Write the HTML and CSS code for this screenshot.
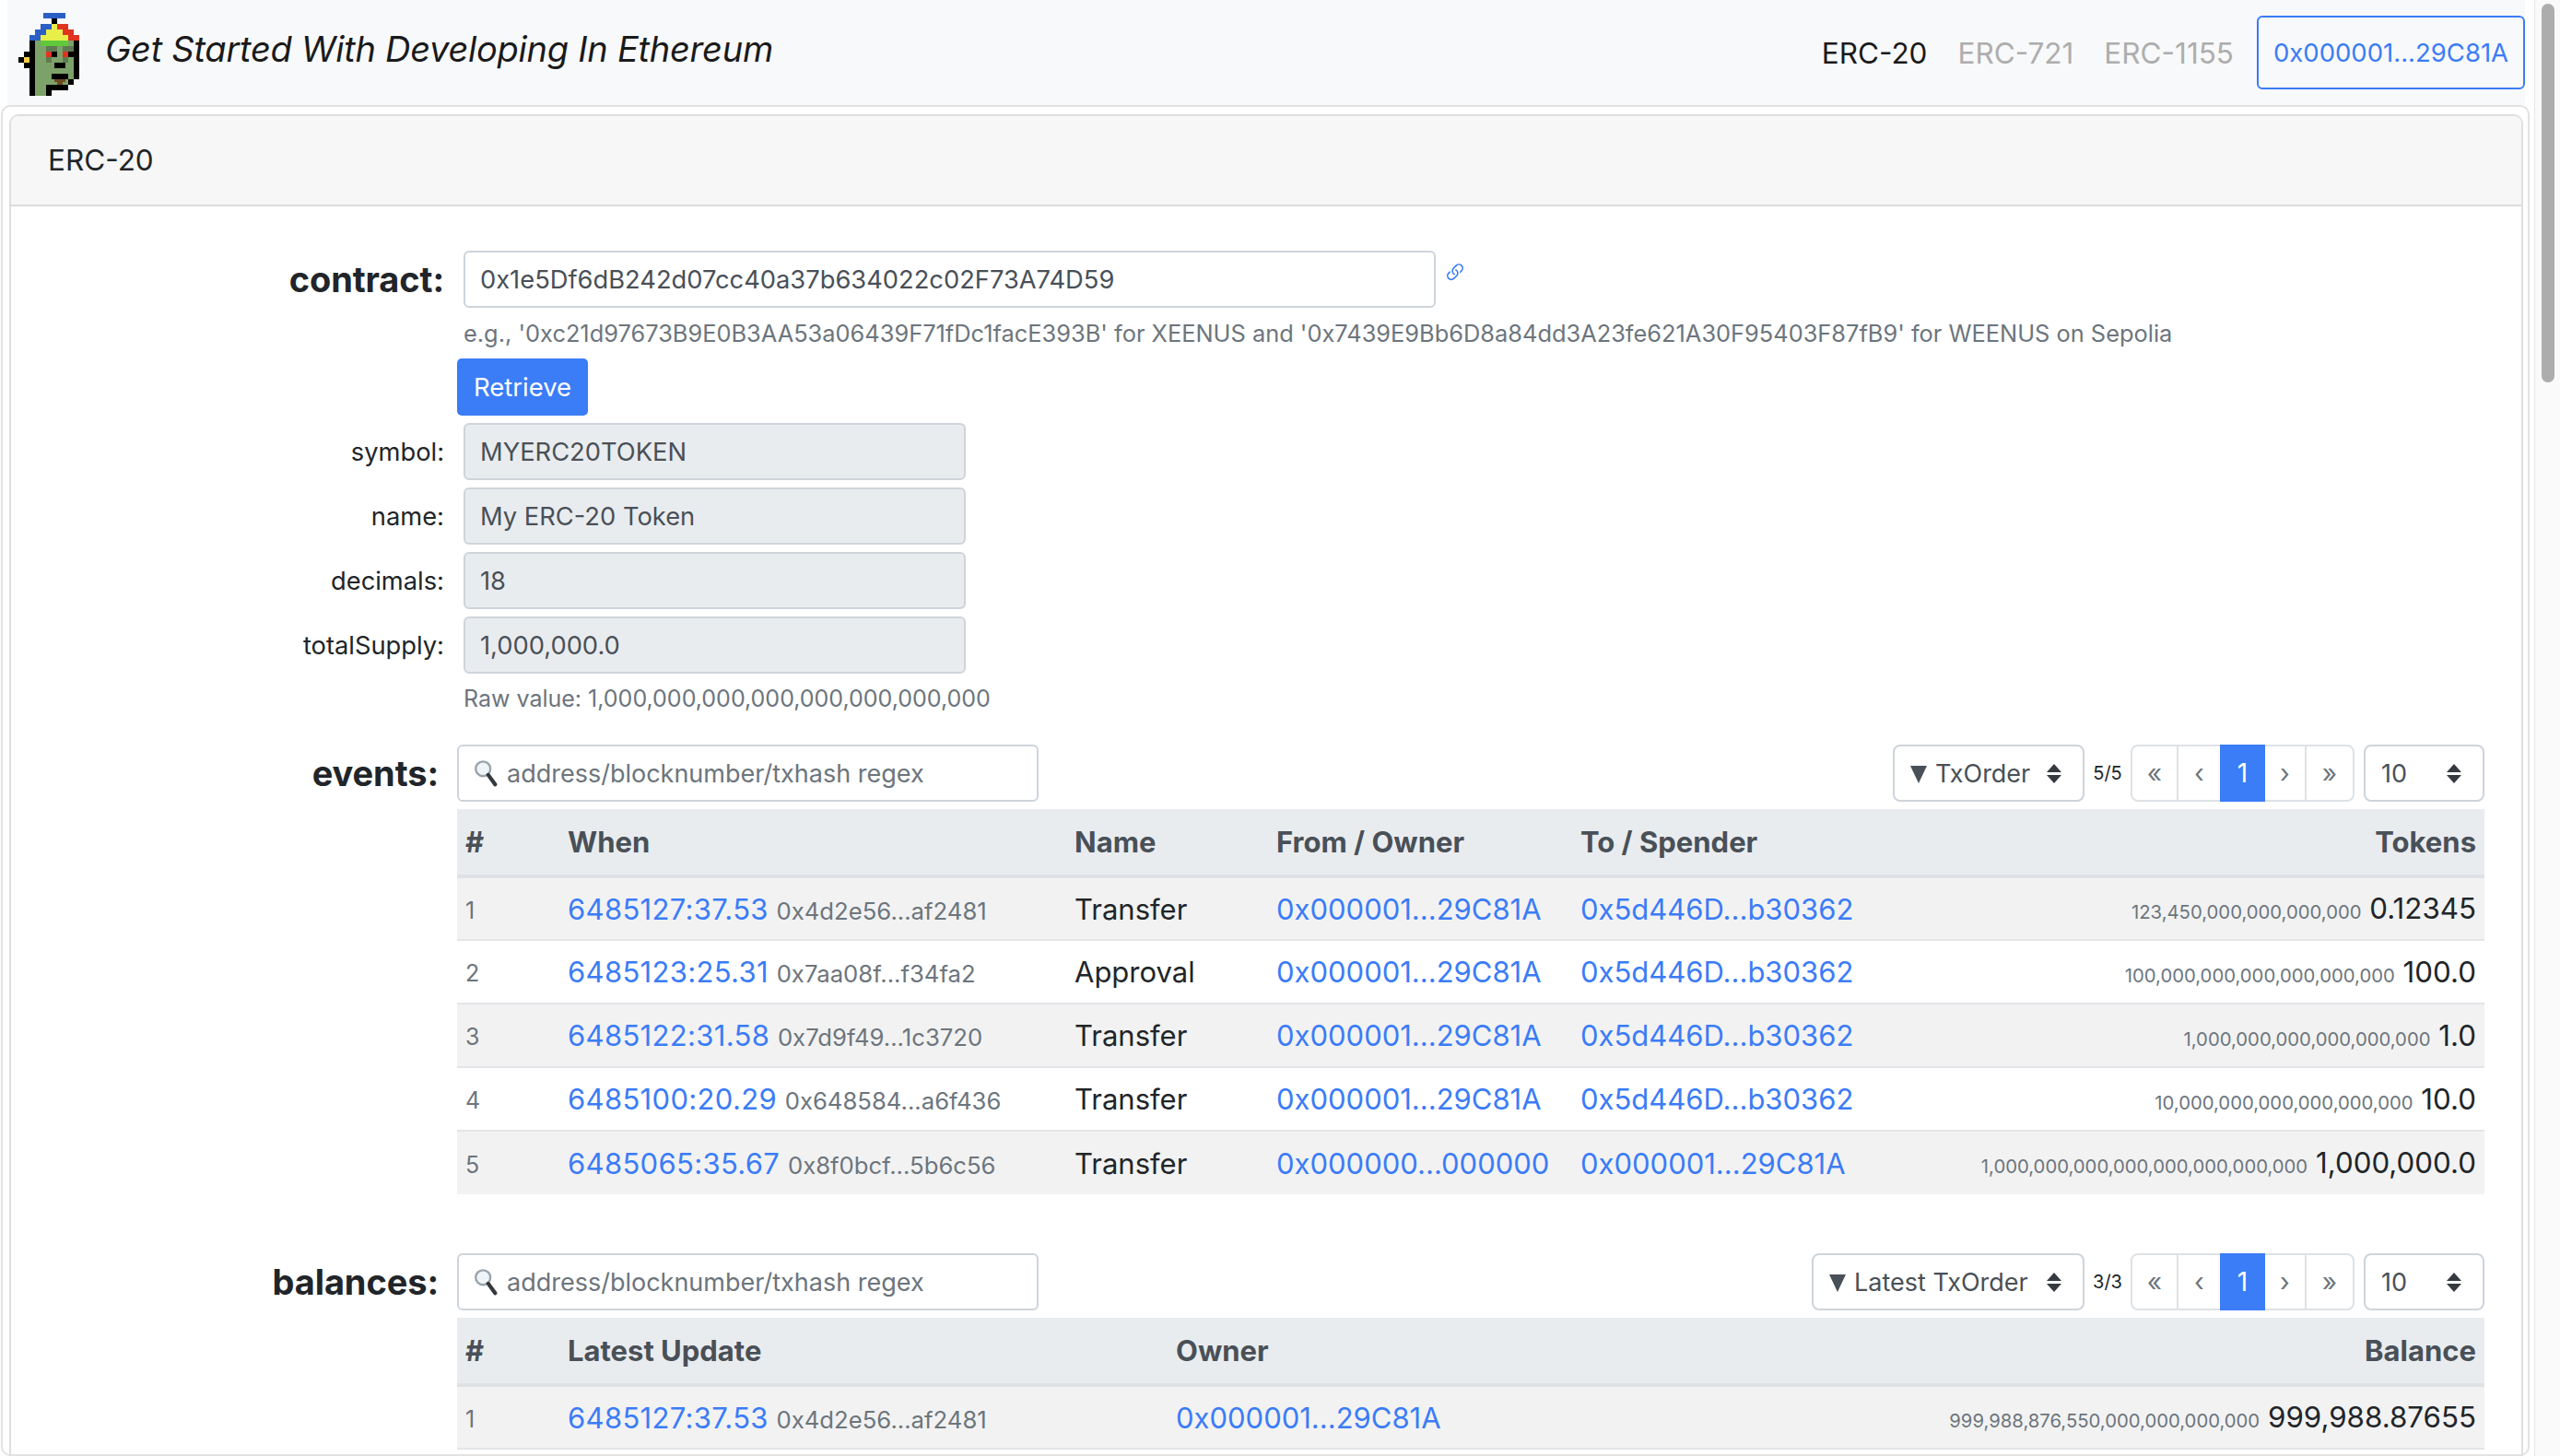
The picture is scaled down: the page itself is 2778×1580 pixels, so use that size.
FILE: index.html
```html
<!DOCTYPE html>
<html>
<head>
    <title>Get Started With Developing In Ethereum</title>
    <meta name="viewport" content="width=device-width, initial-scale=1.0">
    <link rel="stylesheet" href="styles.css">
</head>
<body>
    <div class="app">
        <div class="main">
            <nav class="navbar">
                <svg class="logo" viewBox="60 42 198 270" shape-rendering="crispEdges">
                    <path fill="#7da269" d="M114 132h126v144h-18v18h-72v18h-36z"/>
                    <path fill="#2b5fc6" d="M141 42h72v18h-72zM132 78h36v18h-36zM114 96h36v18h-36zM96 114h36v18H96z"/>
                    <path fill="#e0341e" d="M186 78h36v18h-36zM204 96h36v18h-36zM222 114h36v18h-36z"/>
                    <path fill="#e8ee4a" d="M168 78h18v18h-18zM150 96h54v18h-54zM132 114h90v18h-90z"/>
                    <path fill="#5fc93a" d="M132 132h90v18h-90z"/>
                    <path fill="#5f7a52" d="M150 150h36v18h-36zM204 150h36v18h-36zM150 186h18v18h-18zM204 186h18v18h-18z"/>
                    <path fill="#e0341e" d="M150 168h18v18h-18zM204 168h18v18h-18z"/>
                    <path fill="#000" d="M168 60h18v18h-18zM96 132h18v180H96zM240 132h18v126h-18zM168 168h18v18h-18zM222 168h18v18h-18zM78 168h18v18H78zM60 186h18v18H60zM96 186h18v18H96zM78 204h18v18H78zM178 204h36v18h-36zM168 240h54v18h-54zM222 258h18v18h-18zM150 276h72v18h-72zM150 294h18v18h-18z"/>
                    <path fill="#f5cf4a" d="M78 186h18v18H78z"/>
                    <path fill="#6e4a22" d="M178 258h36v10h-36zM186 268h18v8h-18z"/>
                </svg>
                <span class="brand">Get Started With Developing In Ethereum</span>
                <div class="nav-links">
                    <a class="nav-link active">ERC-20</a>
                    <a class="nav-link">ERC-721</a>
                    <a class="nav-link">ERC-1155</a>
                    <button class="btn-account">0x000001...29C81A</button>
                </div>
            </nav>

            <div class="outer-card">
                <div class="card">
                    <div class="card-header">ERC-20</div>
                    <div class="card-body">
                        <div class="field field-first">
                            <label class="field-label field-label-big">contract:</label>
                            <input class="input input-contract" type="text" value="0x1e5Df6dB242d07cc40a37b634022c02F73A74D59">
                            <svg class="link-icon" viewBox="0 0 16 16" fill="#3b7cf7">
                                <path d="M4.715 6.542 3.343 7.914a3 3 0 1 0 4.243 4.243l1.828-1.829A3 3 0 0 0 8.586 5.500L8 6.086a1.002 1.002 0 0 0-.154.199 2 2 0 0 1 .861 3.337L6.880 11.450a2 2 0 1 1-2.830-2.830l.793-.792a4.018 4.018 0 0 1-.128-1.287z"/>
                                <path d="M6.586 4.672A3 3 0 0 0 7.414 9.500l.775-.776a2 2 0 0 1-.896-3.346L9.120 3.550a2 2 0 1 1 2.830 2.830l-.793.792c.112.420.155.855.128 1.287l1.372-1.372a3 3 0 1 0-4.243-4.243L6.586 4.672z"/>
                            </svg>
                        </div>
                        <div class="help help-hint">e.g., '0xc21d97673B9E0B3AA53a06439F71fDc1facE393B' for XEENUS and '0x7439E9Bb6D8a84dd3A23fe621A30F95403F87fB9' for WEENUS on Sepolia</div>
                        <button class="btn-primary">Retrieve</button>
                        <div class="field">
                            <label class="field-label">symbol:</label>
                            <input class="input input-readonly" type="text" value="MYERC20TOKEN" readonly>
                        </div>
                        <div class="field">
                            <label class="field-label">name:</label>
                            <input class="input input-readonly" type="text" value="My ERC-20 Token" readonly>
                        </div>
                        <div class="field">
                            <label class="field-label">decimals:</label>
                            <input class="input input-readonly" type="text" value="18" readonly>
                        </div>
                        <div class="field">
                            <label class="field-label">totalSupply:</label>
                            <input class="input input-readonly" type="text" value="1,000,000.0" readonly>
                        </div>
                        <div class="help help-raw">Raw value: 1,000,000,000,000,000,000,000,000</div>

                        <section class="section section-events">
                            <label class="section-label">events:</label>
                            <div class="section-content">
                                <div class="toolbar">
                                    <div class="search">
                                        <svg class="search-icon" viewBox="0 0 28 32">
                                            <circle cx="11" cy="11" r="8.500" fill="#eef4f8" stroke="#9aa3aa" stroke-width="2.500"/>
                                            <path d="M17 18l8 11" stroke="#33383c" stroke-width="4.500" stroke-linecap="round"/>
                                        </svg>
                                        <input class="input input-search" type="text" placeholder="address/blocknumber/txhash regex">
                                    </div>
                                    <div class="select select-txorder">
                                        <span class="select-value"><span class="tri"></span>TxOrder</span>
                                        <span class="updown"></span>
                                    </div>
                                    <span class="page-count">5/5</span>
                                    <ul class="pagination">
                                        <li class="page-item page-first">«</li>
                                        <li class="page-item page-prev">‹</li>
                                        <li class="page-item page-current">1</li>
                                        <li class="page-item page-next">›</li>
                                        <li class="page-item page-last">»</li>
                                    </ul>
                                    <div class="select select-size">
                                        <span class="select-value">10</span>
                                        <span class="updown"></span>
                                    </div>
                                </div>
                                <table class="table table-events">
                                    <thead>
                                        <tr><th class="col-num">#</th><th class="col-when">When</th><th class="col-name">Name</th><th class="col-from">From / Owner</th><th class="col-from">To / Spender</th><th class="right">Tokens</th></tr>
                                    </thead>
                                    <tbody>
                                        <tr><td class="num">1</td><td><a class="link when">6485127:37.53</a> <span class="sub">0x4d2e56...af2481</span></td><td>Transfer</td><td><a class="link">0x000001...29C81A</a></td><td><a class="link">0x5d446D...b30362</a></td><td class="right"><span class="raw">123,450,000,000,000,000</span> 0.12345</td></tr>
                                        <tr><td class="num">2</td><td><a class="link when">6485123:25.31</a> <span class="sub">0x7aa08f...f34fa2</span></td><td>Approval</td><td><a class="link">0x000001...29C81A</a></td><td><a class="link">0x5d446D...b30362</a></td><td class="right"><span class="raw">100,000,000,000,000,000,000</span> 100.0</td></tr>
                                        <tr><td class="num">3</td><td><a class="link when">6485122:31.58</a> <span class="sub">0x7d9f49...1c3720</span></td><td>Transfer</td><td><a class="link">0x000001...29C81A</a></td><td><a class="link">0x5d446D...b30362</a></td><td class="right"><span class="raw">1,000,000,000,000,000,000</span> 1.0</td></tr>
                                        <tr><td class="num">4</td><td><a class="link when">6485100:20.29</a> <span class="sub">0x648584...a6f436</span></td><td>Transfer</td><td><a class="link">0x000001...29C81A</a></td><td><a class="link">0x5d446D...b30362</a></td><td class="right"><span class="raw">10,000,000,000,000,000,000</span> 10.0</td></tr>
                                        <tr class="last"><td class="num">5</td><td><a class="link when">6485065:35.67</a> <span class="sub">0x8f0bcf...5b6c56</span></td><td>Transfer</td><td><a class="link">0x000000...000000</a></td><td><a class="link">0x000001...29C81A</a></td><td class="right"><span class="raw">1,000,000,000,000,000,000,000,000</span> 1,000,000.0</td></tr>
                                    </tbody>
                                </table>
                            </div>
                        </section>

                        <section class="section section-balances">
                            <label class="section-label">balances:</label>
                            <div class="section-content">
                                <div class="toolbar">
                                    <div class="search">
                                        <svg class="search-icon" viewBox="0 0 28 32">
                                            <circle cx="11" cy="11" r="8.500" fill="#eef4f8" stroke="#9aa3aa" stroke-width="2.500"/>
                                            <path d="M17 18l8 11" stroke="#33383c" stroke-width="4.500" stroke-linecap="round"/>
                                        </svg>
                                        <input class="input input-search" type="text" placeholder="address/blocknumber/txhash regex">
                                    </div>
                                    <div class="select select-latest">
                                        <span class="select-value"><span class="tri"></span>Latest TxOrder</span>
                                        <span class="updown"></span>
                                    </div>
                                    <span class="page-count">3/3</span>
                                    <ul class="pagination">
                                        <li class="page-item page-first">«</li>
                                        <li class="page-item page-prev">‹</li>
                                        <li class="page-item page-current">1</li>
                                        <li class="page-item page-next">›</li>
                                        <li class="page-item page-last">»</li>
                                    </ul>
                                    <div class="select select-size">
                                        <span class="select-value">10</span>
                                        <span class="updown"></span>
                                    </div>
                                </div>
                                <table class="table table-balances">
                                    <thead>
                                        <tr><th class="col-num">#</th><th class="col-update">Latest Update</th><th>Owner</th><th class="right">Balance</th></tr>
                                    </thead>
                                    <tbody>
                                        <tr><td class="num">1</td><td><a class="link when">6485127:37.53</a> <span class="sub">0x4d2e56...af2481</span></td><td><a class="link">0x000001...29C81A</a></td><td class="right"><span class="raw">999,988,876,550,000,000,000,000</span> 999,988.87655</td></tr>
                                    </tbody>
                                </table>
                            </div>
                        </section>
                    </div>
                </div>
            </div>
        </div>
        <div class="scrollbar"><div class="scrollbar-thumb"></div></div>
    </div>
</body>
</html>
```

FILE: styles.css
```css
* {
    box-sizing: border-box;
}

html, body {
    margin: 0;
    height: 100%;
    overflow: hidden;
}

body {
    background-color: #fff;
    font-family: Inter, 'Liberation Sans', sans-serif;
    font-size: 27.3px;
    color: #212529;
}

.app {
    display: flex;
    height: 1580px;
    overflow: hidden;
}

.main {
    width: 2750px;
    flex: none;
}

/* Top bar */
.navbar {
    display: flex;
    align-items: center;
    height: 114px;
    margin: 0 10px 0 8px;
    background-color: #f8f9fa;
}

.logo {
    width: 66px;
    height: 90px;
    margin: 4px 0 0 12px;
}

.brand {
    margin: -8px 0 0 28px;
    font-size: 38px;
    font-style: italic;
    letter-spacing: -0.25px;
    color: #1a1a1a;
}

.nav-links {
    display: flex;
    align-items: center;
    margin-left: auto;
}

.nav-link {
    margin-right: 33px;
    font-size: 31.5px;
    color: #adadad;
}

.nav-link.active {
    color: #1a1a1a;
}

.btn-account {
    width: 291px;
    height: 80px;
    margin-left: -8px;
    padding: 0;
    border: 2px solid #3b7cf7;
    border-radius: 6px;
    background: transparent;
    color: #3b7cf7;
    font-family: inherit;
    font-size: 27.5px;
}

/* Cards */
.outer-card {
    height: 1466px;
    margin: 0 5px 0 1px;
    padding: 8px 5px 0 7px;
    border: 2px solid #e2e2e2;
    border-radius: 10px;
}

.card {
    height: 1480px;
    border: 2px solid #dfdfdf;
    border-radius: 10px;
}

.card-header {
    height: 98px;
    padding-left: 40px;
    line-height: 96px;
    font-size: 31.5px;
    background-color: #f7f7f7;
    border-bottom: 2px solid #dcdcdc;
    border-radius: 8px 8px 0 0;
}

.card-body {
    padding-top: 48px;
}

/* Token fields */
.field {
    display: flex;
    align-items: center;
    height: 62px;
    margin-bottom: 8px;
}

.field-first {
    margin-bottom: 0;
}

.field-label {
    width: 470px;
    margin-right: 21px;
    text-align: right;
}

.field-label-big {
    font-size: 38px;
    font-weight: 700;
    letter-spacing: -0.1px;
}

.input {
    height: 62px;
    padding: 0 16px;
    border: 2px solid #ced4da;
    border-radius: 6px;
    font-family: inherit;
    font-size: 27.3px;
    color: #495057;
    outline: none;
}

.input-contract {
    width: 1055px;
}

.input-readonly {
    width: 545px;
    background-color: #e9ecef;
}

.link-icon {
    width: 26px;
    height: 26px;
    margin: -15px 0 0 8px;
}

.help {
    font-size: 25px;
    color: #6c757d;
    margin-left: 491px;
}

.help-hint {
    height: 55px;
    line-height: 56px;
    font-size: 25.4px;
}

.help-raw {
    height: 40px;
    line-height: 38px;
    margin-bottom: 29px;
}

.btn-primary {
    display: block;
    width: 142px;
    height: 62px;
    margin: 0 0 8px 484px;
    padding: 0;
    border: none;
    border-radius: 5px;
    background-color: #3b7cf7;
    color: #fff;
    font-family: inherit;
    font-size: 27.5px;
}

/* events and balances */
.section {
    display: flex;
}

.section-balances {
    margin-top: 64px;
}

.section-label {
    width: 464px;
    margin-right: 20px;
    line-height: 62px;
    text-align: right;
    font-size: 38px;
    font-weight: 700;
    letter-spacing: -0.1px;
}

.section-content {
    width: 2200px;
}

.toolbar {
    display: flex;
    align-items: center;
    height: 62px;
    margin-bottom: 8px;
}

.search {
    position: relative;
    margin-right: auto;
}

.search-icon {
    position: absolute;
    left: 17px;
    top: 16px;
    width: 28px;
    height: 30px;
}

.input-search {
    display: block;
    width: 631px;
    padding-left: 52px;
    font-size: 27px;
}

.input-search::placeholder {
    color: #6c757d;
    opacity: 1;
}

.select {
    position: relative;
    display: flex;
    align-items: center;
    height: 62px;
    padding-left: 17px;
    border: 2px solid #ced4da;
    border-radius: 8px;
    font-size: 27px;
    color: #495057;
}

.select-txorder {
    width: 208px;
}

.select-latest {
    width: 296px;
}

.select-size {
    width: 131px;
}

.tri {
    display: inline-block;
    margin-right: 9px;
    border-top: 19px solid #495057;
    border-left: 9px solid transparent;
    border-right: 9px solid transparent;
    vertical-align: -1px;
}

.updown {
    position: absolute;
    right: 23px;
    top: 19px;
    width: 16px;
    height: 21px;
}

.updown::before,
.updown::after {
    content: "";
    position: absolute;
    left: 0;
    border-left: 8px solid transparent;
    border-right: 8px solid transparent;
}

.updown::before {
    top: 0;
    border-bottom: 9px solid #343a40;
}

.updown::after {
    bottom: 0;
    border-top: 9px solid #343a40;
}

.page-count {
    width: 50px;
    text-align: center;
    font-size: 20px;
}

.pagination {
    display: flex;
    height: 62px;
    margin: 0 10px 0 0;
    padding: 0;
    list-style: none;
    border: 2px solid #dee2e6;
    border-radius: 8px;
    font-size: 28px;
    color: #6c757d;
}

.page-item {
    display: flex;
    align-items: center;
    justify-content: center;
    height: 58px;
}

.page-first {
    width: 50px;
    border-right: 2px solid #dee2e6;
}

.page-prev {
    width: 45px;
}

.page-current {
    width: 49px;
    height: 62px;
    margin-top: -2px;
    background-color: #3b7cf7;
    color: #fff;
}

.page-next {
    width: 45px;
    border-right: 2px solid #dee2e6;
}

.page-last {
    width: 50px;
}

/* Tables */
.table {
    width: 100%;
    border-collapse: collapse;
    table-layout: fixed;
}

.table th {
    height: 73px;
    padding: 0 9px;
    text-align: left;
    font-size: 31px;
    font-weight: 700;
    color: #495057;
    background-color: #e9ecef;
    border-bottom: 4px solid #dee2e6;
}

.table td {
    height: 69px;
    padding: 0 9px;
    font-size: 31px;
    white-space: nowrap;
    border-bottom: 2px solid #e3e5e8;
}

.table tbody tr:nth-child(odd) td {
    background-color: #f2f2f2;
}

.table tr.last td {
    border-bottom: none;
}

.table .right {
    text-align: right;
}

.table td.right {
    font-size: 31.3px;
}

.table td.num {
    padding-top: 3px;
    font-size: 25px;
    color: #6c757d;
}

.col-num {
    width: 111px;
}

.col-when {
    width: 550px;
}

.col-name {
    width: 219px;
}

.col-from {
    width: 330px;
}

.col-update {
    width: 660px;
}

.link {
    color: #3b7cf7;
}

.when {
    letter-spacing: 0.33px;
}

.sub {
    font-size: 25.7px;
    color: #6c757d;
}

.raw {
    font-size: 20.3px;
    color: #6c757d;
}

/* Page scrollbar */
.scrollbar {
    flex: 1;
    padding: 4px 6px 0 7px;
    background-color: #fafafa;
    border-left: 1px solid #e8e8e8;
}

.scrollbar-thumb {
    height: 411px;
    border-radius: 8px;
    background-color: #adadad;
}
```
